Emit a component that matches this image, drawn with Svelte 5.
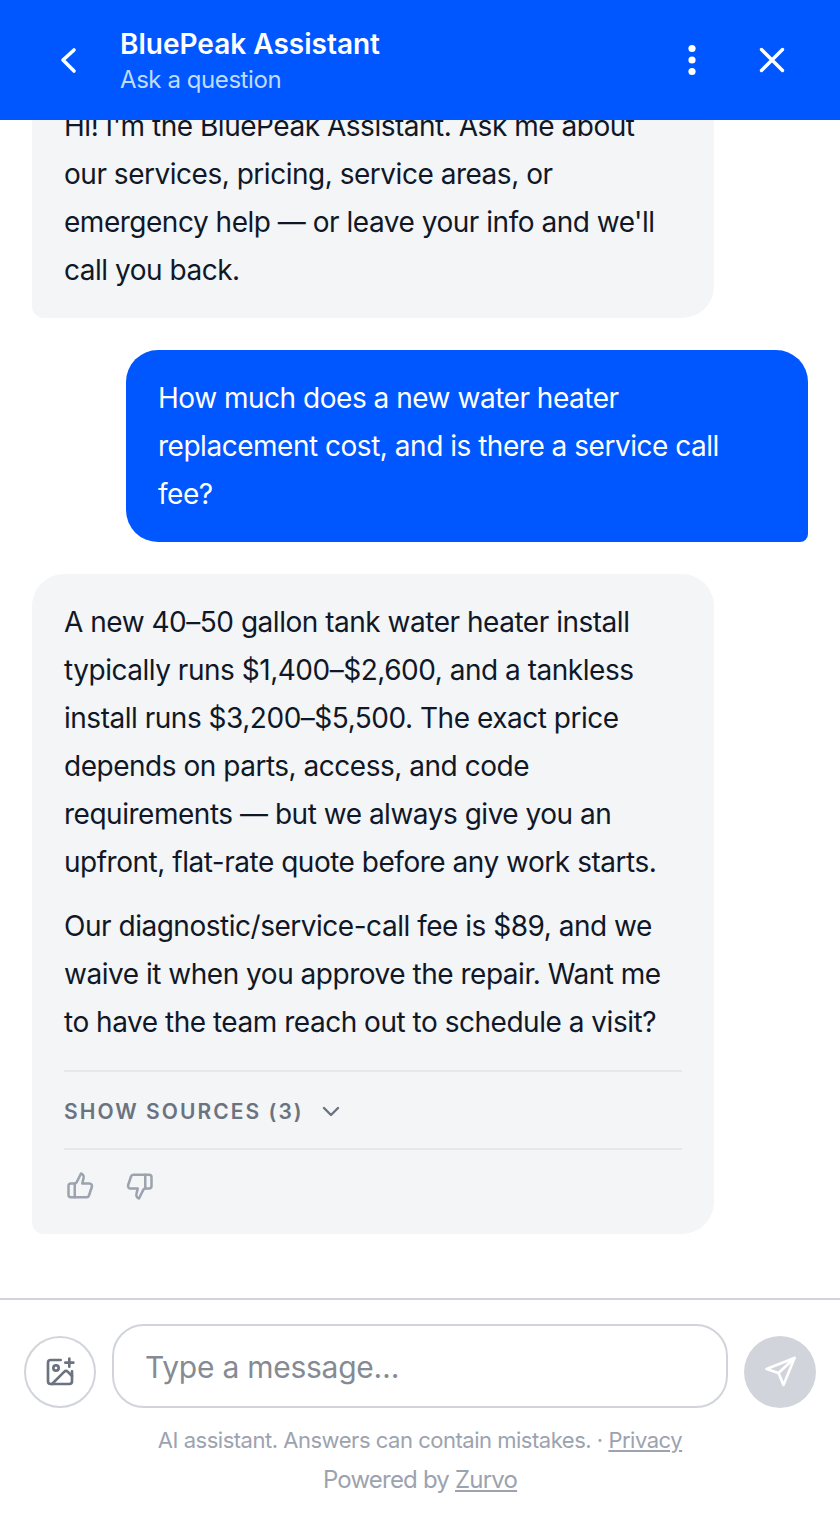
<script>
	const intro = "Hi! I'm the BluePeak Assistant. Ask me about our services, pricing, service areas, or emergency help — or leave your info and we'll call you back.";
	const question = 'How much does a new water heater replacement cost, and is there a service call fee?';
</script>

<style>
	:global(body) {
		margin: 0;
		background: #fff;
	}

	.chat {
		display: flex;
		flex-direction: column;
		height: 1520px;
		font-family: Inter, "Liberation Sans", sans-serif;
		color: #101828;
	}

	.header {
		flex: none;
		display: flex;
		align-items: center;
		height: 120px;
		padding: 0 44px;
		box-sizing: border-box;
		background: #0057ff;
		color: #fff;
		position: relative;
		z-index: 1;
	}

	.icon-btn {
		display: flex;
		align-items: center;
		justify-content: center;
		width: 48px;
		height: 48px;
		flex: none;
	}

	.titles {
		flex: 1;
		margin-left: 28px;
	}

	.title {
		font-size: 28px;
		font-weight: 600;
		line-height: 40px;
	}

	.subtitle {
		font-size: 24px;
		line-height: 32px;
		letter-spacing: -0.43px;
		color: #bfdbfe;
	}

	.menu {
		margin-right: 32px;
	}

	.messages {
		flex: 1;
		min-height: 0;
		overflow: hidden;
		display: flex;
		flex-direction: column;
		justify-content: flex-end;
		gap: 32px;
		padding: 0 32px 64px;
	}

	.bubble {
		flex: none;
		width: 682px;
		box-sizing: border-box;
		padding: 24px 32px;
		font-size: 28px;
		line-height: 48px;
		letter-spacing: -0.48px;
	}

	.bubble p {
		margin: 0;
	}

	.bubble p + p {
		margin-top: 16px;
	}

	.bot {
		align-self: flex-start;
		background: #f3f5f7;
		border-radius: 32px 32px 32px 12px;
	}

	.user {
		align-self: flex-end;
		background: #0057ff;
		color: #fff;
		border-radius: 32px 32px 8px 32px;
	}

	.sources {
		display: flex;
		align-items: center;
		gap: 17px;
		margin-top: 24px;
		padding-top: 4px;
		height: 72px;
		border-top: 2px solid #e5e7eb;
		border-bottom: 2px solid #e5e7eb;
		font-size: 21px;
		font-weight: 600;
		letter-spacing: 2.05px;
		color: #6b7280;
	}

	.feedback {
		display: flex;
		gap: 28px;
		padding: 21px 0 9px 2px;
		color: #9ca3af;
		height: 30px;
	}

	.footer {
		flex: none;
		border-top: 2px solid #d1d5db;
		padding: 24px 24px 0;
		height: 222px;
		box-sizing: border-box;
	}

	.composer {
		display: flex;
		align-items: flex-end;
		gap: 16px;
	}

	.attach {
		flex: none;
		display: flex;
		align-items: center;
		justify-content: center;
		width: 72px;
		height: 72px;
		box-sizing: border-box;
		border: 2px solid #d1d5db;
		border-radius: 50%;
		color: #6b7280;
	}

	.input {
		flex: 1;
		height: 84px;
		box-sizing: border-box;
		display: flex;
		align-items: center;
		padding: 2px 31px 0;
		border: 2px solid #d1d5db;
		border-radius: 32px;
		font-size: 30px;
		letter-spacing: -0.25px;
		color: #858a93;
	}

	.send {
		flex: none;
		display: flex;
		align-items: center;
		justify-content: center;
		width: 72px;
		height: 72px;
		border-radius: 50%;
		background: #d1d5db;
		color: #fff;
	}

	.legal {
		margin-top: 12px;
		text-align: center;
		font-size: 22px;
		line-height: 40px;
		letter-spacing: -0.48px;
		color: #9ca3af;
	}

	.powered {
		font-size: 24px;
		letter-spacing: -0.8px;
	}

	.legal a {
		color: inherit;
		text-decoration: underline;
	}
</style>

<div class="chat">
	<header class="header">
		<div class="icon-btn">
			<svg width="48" height="48" viewBox="0 0 48 48" fill="none" stroke="currentColor" stroke-width="3.6" stroke-linecap="round" stroke-linejoin="round"><path d="M30 14 L19 24 L30 35" /></svg>
		</div>
		<div class="titles">
			<div class="title">BluePeak Assistant</div>
			<div class="subtitle">Ask a question</div>
		</div>
		<div class="icon-btn menu">
			<svg width="48" height="48" viewBox="0 0 48 48" fill="currentColor"><circle cx="24" cy="12.5" r="3.6"/><circle cx="24" cy="24" r="3.6"/><circle cx="24" cy="35.5" r="3.6"/></svg>
		</div>
		<div class="icon-btn">
			<svg width="48" height="48" viewBox="0 0 48 48" fill="none" stroke="currentColor" stroke-width="3.4" stroke-linecap="round"><path d="M13.500 13.500 L34.500 34.500 M34.500 13.500 L13.500 34.500"/></svg>
		</div>
	</header>

	<div class="messages">
		<div class="bubble bot"><p>{intro}</p></div>
		<div class="bubble user"><p>{question}</p></div>
		<div class="bubble bot">
			<p>A new 40–50 gallon tank water heater install typically runs $1,400–$2,600, and a tankless install runs $3,200–$5,500. The exact price depends on parts, access, and code requirements — but we always give you an upfront, flat-rate quote before any work starts.</p>
			<p>Our diagnostic/service-call fee is $89, and we waive it when you approve the repair. Want me to have the team reach out to schedule a visit?</p>
			<div class="sources">
				<span>SHOW SOURCES (3)</span>
				<svg width="20" height="12" viewBox="0 0 20 12" fill="none" stroke="currentColor" stroke-width="2.4" stroke-linecap="round" stroke-linejoin="round"><path d="M3 2 L10 9 L17 2"/></svg>
			</div>
			<div class="feedback">
				<svg width="30" height="30" viewBox="0 0 24 24" fill="none" stroke="currentColor" stroke-width="2" stroke-linecap="round" stroke-linejoin="round"><path d="M7 10v11"/><path d="M14 5.900 13 10h5.800a2 2 0 0 1 1.900 2.600l-2.300 7a2 2 0 0 1-1.900 1.400H4a2 2 0 0 1-2-2v-7a2 2 0 0 1 2-2h2.800a2 2 0 0 0 1.800-1.100L12 2a3.100 3.100 0 0 1 2 3.900Z"/></svg>
				<svg width="30" height="30" viewBox="0 0 24 24" fill="none" stroke="currentColor" stroke-width="2" stroke-linecap="round" stroke-linejoin="round"><path d="M17 14V3"/><path d="M10 18.100 11 14H5.200a2 2 0 0 1-1.900-2.600l2.300-7A2 2 0 0 1 7.500 3H20a2 2 0 0 1 2 2v7a2 2 0 0 1-2 2h-2.800a2 2 0 0 0-1.800 1.100L12 22a3.100 3.100 0 0 1-2-3.900Z"/></svg>
			</div>
		</div>
	</div>

	<footer class="footer">
		<div class="composer">
			<div class="attach">
				<svg width="32" height="32" viewBox="0 0 24 24" fill="none" stroke="currentColor" stroke-width="2" stroke-linecap="round" stroke-linejoin="round"><path d="M16 5h6"/><path d="M19 2v6"/><path d="M21 11.500V19a2 2 0 0 1-2 2H5a2 2 0 0 1-2-2V5a2 2 0 0 1 2-2h7.500"/><path d="m21 15-3.100-3.100a2 2 0 0 0-2.800 0L6 21"/><circle cx="9" cy="9" r="2"/></svg>
			</div>
			<div class="input">Type a message…</div>
			<div class="send">
				<svg width="36" height="36" viewBox="0 0 36 36" fill="none" stroke="currentColor" stroke-width="2.600" stroke-linecap="round" stroke-linejoin="round"><path d="M32.500 4 L4.500 15 L16.500 19 L21.500 31 Z"/><path d="M16.500 19 L32.500 4"/></svg>
			</div>
		</div>
		<div class="legal">
			<div>AI assistant. Answers can contain mistakes. · <a href="#privacy">Privacy</a></div>
			<div class="powered">Powered by <a href="#zurvo">Zurvo</a></div>
		</div>
	</footer>
</div>
